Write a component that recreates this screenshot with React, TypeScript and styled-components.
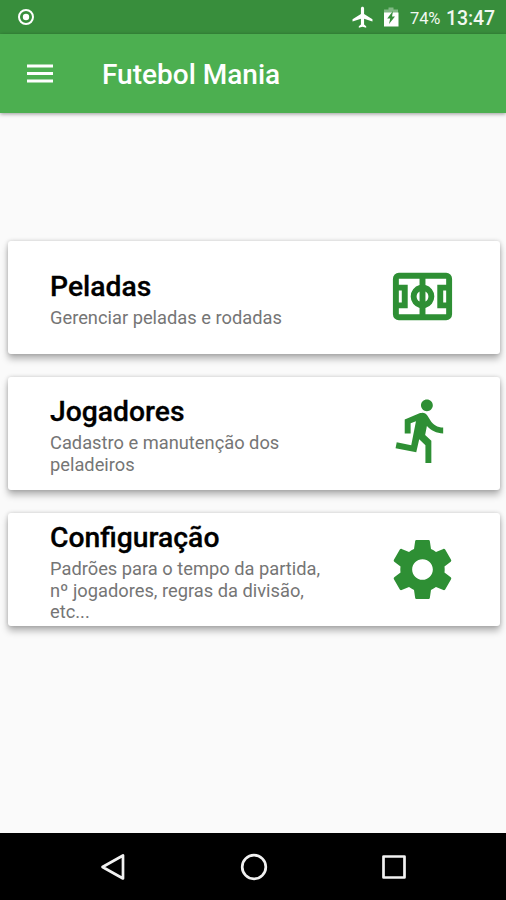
import React from 'react';
import styled, { createGlobalStyle } from 'styled-components';

const GlobalStyle = createGlobalStyle`
  * { box-sizing: border-box; }
  body { margin: 0; background: #fafafa; font-family: Roboto, "Liberation Sans", sans-serif; }
`;

const Screen = styled.div`
  display: flex;
  flex-direction: column;
  width: 506px;
  height: 900px;
  background: #fafafa;
  overflow: hidden;
`;

const StatusBar = styled.header`
  display: flex;
  align-items: center;
  flex: none;
  height: 34px;
  padding: 0 11px 0 17px;
  background: #388e3c;
  color: #f1f8f1;
`;

const StatusItems = styled.div`
  display: flex;
  align-items: center;
  gap: 11px;
  margin-left: auto;
  height: 34px;
`;

const BatteryLevel = styled.span`
  width: 32px;
  margin: 3px -7px 0 0;
  font-size: 16.5px;
  line-height: 20px;
  letter-spacing: -0.1px;
  white-space: nowrap;
`;

const Clock = styled.span`
  width: 49px;
  margin-top: 3px;
  font-size: 19.5px;
  font-weight: 500;
  line-height: 22px;
  letter-spacing: -0.1px;
  white-space: nowrap;
`;

const AppBar = styled.div`
  display: flex;
  align-items: center;
  flex: none;
  height: 79px;
  padding-left: 27px;
  background: #4caf50;
  color: #fff;
  box-shadow: 0 1px 4px rgba(0, 0, 0, 0.4);
`;

const AppTitle = styled.h1`
  margin: 3px 0 0 49px;
  font-size: 28px;
  font-weight: 500;
  line-height: 32px;
  white-space: nowrap;
`;

const Menu = styled.main`
  display: flex;
  flex: 1;
  flex-direction: column;
  justify-content: center;
  gap: 23.4px;
  padding: 1px 6px 80px 7.5px;
`;

const Card = styled.section`
  display: flex;
  align-items: center;
  justify-content: space-between;
  height: 113px;
  padding: 0 42px 0 42.5px;
  border-radius: 3px;
  background: #fff;
  box-shadow: 0 5px 7px rgba(0, 0, 0, 0.28), 0 0 4px rgba(0, 0, 0, 0.18);
`;

const CardText = styled.div`
  width: 280px;
  margin-top: 4px;
`;

const CardTitle = styled.h2`
  margin: 0;
  color: #000;
  font-size: 28.3px;
  font-weight: 500;
  line-height: 33px;
  -webkit-text-stroke: 0.3px #000;
`;

const CardDescription = styled.p`
  margin: 4px 0 0;
  color: #757575;
  font-size: 18.3px;
  line-height: 21.6px;
  white-space: pre-line;
`;

const CardIcon = styled.svg<{ $lift?: number }>`
  flex: none;
  width: 71px;
  height: 71px;
  margin-bottom: ${({ $lift = 0 }) => $lift * 2}px;
  fill: #2e8f34;
`;

const NavigationBar = styled.nav`
  display: flex;
  align-items: center;
  justify-content: space-between;
  flex: none;
  height: 67px;
  padding: 0 98px 0 99px;
  background: #000;
`;

const NavIcon = styled.svg`
  width: 28px;
  height: 28px;
  fill: none;
  stroke: #f2f2f2;
  stroke-width: 2.7;
  stroke-linejoin: round;
`;

const FieldShape = () => (
  <path
    fillRule="evenodd"
    d="M4 4a2 2 0 0 0-2 2v12a2 2 0 0 0 2 2h16a2 2 0 0 0 2-2V6a2 2 0 0 0-2-2H4zm0 2h7v2.13a4 4 0 0 0 0 7.74V18H4v-2h3V8H4V6zm9 0h7v2h-3v8h3v2h-7v-2.13a4 4 0 0 0 0-7.74V6zM4 10h1v4H4v-4zm15 0h1v4h-1v-4zm-8 .27v3.46a2 2 0 0 1 0-3.46zm2 0a2 2 0 0 1 0 3.46v-3.46z"
  />
);

const RunnerShape = () => (
  <path d="M13.49 5.48c1.1 0 2-.9 2-2s-.9-2-2-2-2 .9-2 2 .9 2 2 2zm-3.6 13.9l1-4.4 2.1 2v6h2v-7.5l-2.1-2 .6-3c1.3 1.5 3.3 2.5 5.5 2.5v-2c-1.9 0-3.5-1-4.3-2.4l-1-1.6c-.4-.6-1-1-1.7-1-.3 0-.5.1-.8.1l-5.2 2.2v4.7h2v-3.4l1.8-.7-1.6 8.1-4.9-1-.4 2 7 1.4z" />
);

const GearShape = () => (
  <path d="M19.43 12.98c.04-.32.07-.64.07-.98s-.03-.66-.07-.98l2.11-1.65c.19-.15.24-.42.12-.64l-2-3.46c-.12-.22-.39-.3-.61-.22l-2.49 1c-.52-.4-1.08-.73-1.69-.98l-.38-2.65C14.46 2.18 14.25 2 14 2h-4c-.25 0-.46.18-.49.42l-.38 2.65c-.61.25-1.17.59-1.69.98l-2.49-1c-.23-.09-.49 0-.61.22l-2 3.46c-.13.22-.07.49.12.64l2.11 1.65c-.04.32-.07.65-.07.98s.03.66.07.98l-2.11 1.65c-.19.15-.24.42-.12.64l2 3.46c.12.22.39.3.61.22l2.49-1c.52.4 1.08.73 1.69.98l.38 2.65c.03.24.24.42.49.42h4c.25 0 .46-.18.49-.42l.38-2.65c.61-.25 1.17-.59 1.69-.98l2.49 1c.23.09.49 0 .61-.22l2-3.46c.12-.22.07-.49-.12-.64l-2.11-1.65zM12 15.5c-1.93 0-3.5-1.57-3.5-3.5s1.57-3.5 3.5-3.5 3.5 1.57 3.5 3.5-1.57 3.5-3.5 3.5z" />
);

const entries = [
  { title: 'Peladas', text: 'Gerenciar peladas e rodadas', Shape: FieldShape, lift: 0.5 },
  { title: 'Jogadores', text: 'Cadastro e manutenção dos\npeladeiros', Shape: RunnerShape, lift: 3.2 },
  {
    title: 'Configuração',
    text: 'Padrões para o tempo da partida,\nnº jogadores, regras da divisão,\netc...',
    Shape: GearShape,
    lift: 0,
  },
];

export default function App() {
  return (
    <>
      <GlobalStyle />
      <Screen>
        <StatusBar>
          <svg width="18" height="18" viewBox="0 0 18 18" fill="none">
            <circle cx="9" cy="9" r="7" stroke="#fff" strokeWidth="2" />
            <circle cx="9" cy="9" r="3.2" fill="#fff" />
          </svg>
          <StatusItems>
            <svg width="21" height="22" viewBox="1.5 1.5 20 20.5" fill="#fff">
              <path d="M21 16v-2l-8-5V3.5c0-.83-.67-1.5-1.5-1.5S10 2.67 10 3.5V9l-8 5v2l8-2.5V19l-2 1.5V22l3.5-1 3.5 1v-1.5L13 19v-5.5l8 2.5z" />
            </svg>
            <svg width="15" height="22" viewBox="0 0 15 22">
              <path fill="#82b985" d="M4.5 1.5h5v2H14v5H0v-5h4.5z" />
              <path fill="#fff" d="M0 6.5h14.5v14H0z" />
              <path fill="#388e3c" d="M9 5 3.2 12.5h3L5 18l6-7.5H8z" />
            </svg>
            <BatteryLevel>74%</BatteryLevel>
            <Clock>13:47</Clock>
          </StatusItems>
        </StatusBar>
        <AppBar>
          <svg width="26" height="20" viewBox="0 0 26 20" fill="#fff">
            <path d="M0 .4h26v3H0zM0 8h26v3H0zM0 15.6h26v3H0z" />
          </svg>
          <AppTitle>Futebol Mania</AppTitle>
        </AppBar>
        <Menu>
          {entries.map(({ title, text, Shape, lift }) => (
            <Card key={title}>
              <CardText>
                <CardTitle>{title}</CardTitle>
                <CardDescription>{text}</CardDescription>
              </CardText>
              <CardIcon viewBox="0 0 24 24" $lift={lift}>
                <Shape />
              </CardIcon>
            </Card>
          ))}
        </Menu>
        <NavigationBar>
          <NavIcon viewBox="0 0 28 28">
            <path d="M24 2.5v23L3.5 14z" />
          </NavIcon>
          <NavIcon viewBox="0 0 28 28">
            <circle cx="14" cy="14" r="11.8" />
          </NavIcon>
          <NavIcon viewBox="0 0 28 28">
            <path d="M3.5 3.5h21v21h-21z" />
          </NavIcon>
        </NavigationBar>
      </Screen>
    </>
  );
}
